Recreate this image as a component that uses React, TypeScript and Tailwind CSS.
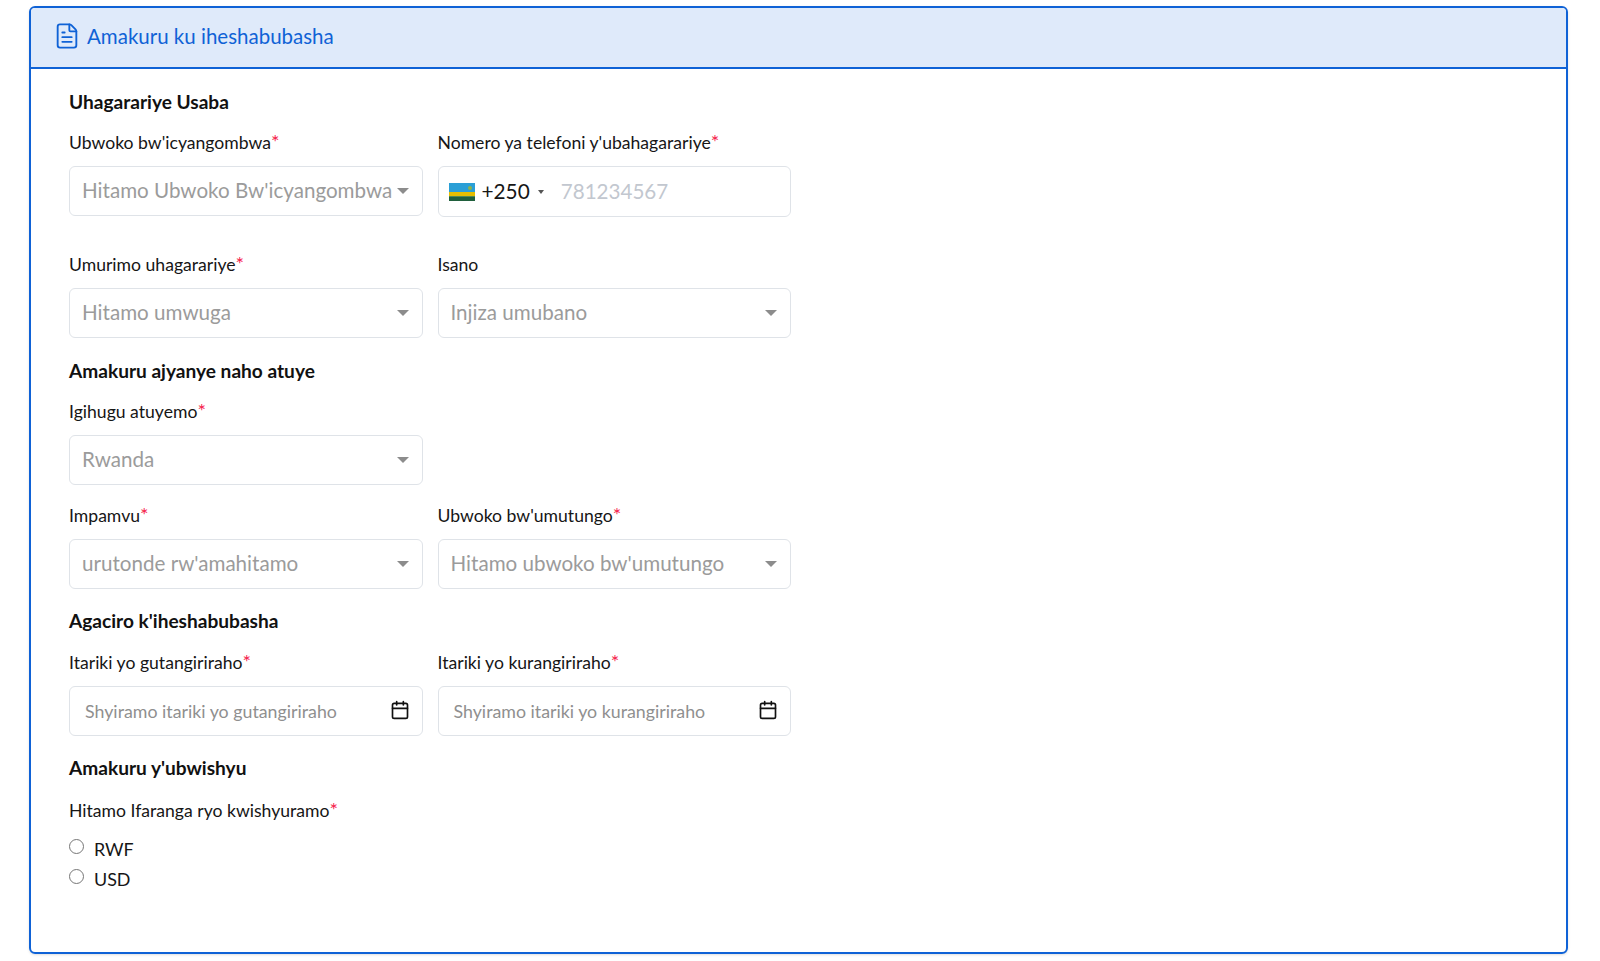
import { Calendar, FileText } from 'lucide-react';

const fontStack = "font-['Lato','Open_Sans',sans-serif]";

const Label = ({ text, required }: { text: string; required?: boolean }) => (
  <div className="h-6 whitespace-nowrap text-[17.6px] leading-6 text-[#161616]">
    {text}
    {required && <span className="text-[20px] leading-none text-[#f5224b]">*</span>}
  </div>
);

const Caret = () => (
  <span className="h-0 w-0 border-x-[6px] border-t-[6px] border-x-transparent border-t-[#8c8c8c]" />
);

const SelectField = ({ label, placeholder, required }: { label: string; placeholder: string; required?: boolean }) => (
  <div>
    <Label text={label} required={required} />
    <div className="mt-[11px] flex h-[50px] items-center justify-between rounded-md border border-[#dfe3e8] pl-3 pr-[13px]">
      <span className="mb-px whitespace-nowrap text-[20.6px] text-[#9b9b9b]">{placeholder}</span>
      <Caret />
    </div>
  </div>
);

const DateField = ({ label, placeholder }: { label: string; placeholder: string }) => (
  <div>
    <Label text={label} required />
    <div className="mt-[11px] flex h-[50px] items-center justify-between rounded-md border border-[#dfe3e8] pl-[15px] pr-[12px]">
      <span className="whitespace-nowrap text-[17.8px] text-[#8f8f8f]">{placeholder}</span>
      <Calendar size={20} strokeWidth={2} className="mb-[2px] text-[#111]" />
    </div>
  </div>
);

const PhoneField = () => (
  <div>
    <Label text="Nomero ya telefoni y'ubahagarariye" required />
    <div className="mt-[11px] flex h-[51px] items-center rounded-md border border-[#dfe3e8] pl-[10px]">
      <svg width="26" height="18" viewBox="0 0 26 18">
        <rect width="26" height="18" fill="#2a9fd6" />
        <rect y="9" width="26" height="4.5" fill="#e5be01" />
        <rect y="13.5" width="26" height="4.5" fill="#20603d" />
        <circle cx="21" cy="5" r="2" fill="#8fb34a" />
      </svg>
      <span className="mb-px ml-[7px] text-[20.8px] text-[#161616]">+250</span>
      <span className="ml-2 h-0 w-0 border-x-[3.5px] border-t-[4px] border-x-transparent border-t-[#555]" />
      <span className="mb-px ml-[17px] text-[20.6px] text-[#c2c7cf]">781234567</span>
    </div>
  </div>
);

const Radio = ({ label }: { label: string }) => (
  <div className="flex h-[30px] items-center">
    <span className="mb-[5px] h-[15px] w-[15px] rounded-full border border-[#767676]" />
    <span className="ml-[10px] text-[17.9px] text-[#161616]">{label}</span>
  </div>
);

const Heading = ({ text }: { text: string }) => (
  <h2 className="h-6 text-[19.1px] font-bold leading-6 text-[#111]">{text}</h2>
);

export default function App() {
  return (
    <div className={`${fontStack} h-[961px] bg-white pl-[29px] pr-[32px] pt-[6px]`}>
      <div className="h-[948px] overflow-hidden rounded-md border-2 border-[#0f62d6] shadow-sm">
        <div className="flex h-[61px] items-center gap-[6px] border-b-2 border-[#0f62d6] bg-[#dfeafa] pl-[22px] text-[#0f62d6]">
          <FileText size={28} strokeWidth={1.6} className="mb-[3px]" />
          <span className="mb-[3px] text-[20.5px]">Amakuru ku iheshabubasha</span>
        </div>
        <div className="w-[797px] pl-[38px] pr-[37px] pt-[21px]">
          <Heading text="Uhagarariye Usaba" />
          <div className="mt-[17px] grid grid-cols-2 gap-x-[15px]">
            <SelectField label="Ubwoko bw'icyangombwa" placeholder="Hitamo Ubwoko Bw'icyangombwa" required />
            <PhoneField />
          </div>
          <div className="mt-[36px] grid grid-cols-2 gap-x-[15px]">
            <SelectField label="Umurimo uhagarariye" placeholder="Hitamo umwuga" required />
            <SelectField label="Isano" placeholder="Injiza umubano" />
          </div>
          <div className="mt-[21px]">
            <Heading text="Amakuru ajyanye naho atuye" />
          </div>
          <div className="mt-[17px] grid grid-cols-2 gap-x-[15px]">
            <SelectField label="Igihugu atuyemo" placeholder="Rwanda" required />
          </div>
          <div className="mt-[19px] grid grid-cols-2 gap-x-[15px]">
            <SelectField label="Impamvu" placeholder="urutonde rw'amahitamo" required />
            <SelectField label="Ubwoko bw'umutungo" placeholder="Hitamo ubwoko bw'umutungo" required />
          </div>
          <div className="mt-[20px]">
            <Heading text="Agaciro k'iheshabubasha" />
          </div>
          <div className="mt-[18px] grid grid-cols-2 gap-x-[15px]">
            <DateField label="Itariki yo gutangiriraho" placeholder="Shyiramo itariki yo gutangiriraho" />
            <DateField label="Itariki yo kurangiriraho" placeholder="Shyiramo itariki yo kurangiriraho" />
          </div>
          <div className="mt-[20px]">
            <Heading text="Amakuru y'ubwishyu" />
          </div>
          <div className="mt-[19px]">
            <Label text="Hitamo Ifaranga ryo kwishyuramo" required />
          </div>
          <div className="mt-[11px]">
            <Radio label="RWF" />
            <Radio label="USD" />
          </div>
        </div>
      </div>
    </div>
  );
}
